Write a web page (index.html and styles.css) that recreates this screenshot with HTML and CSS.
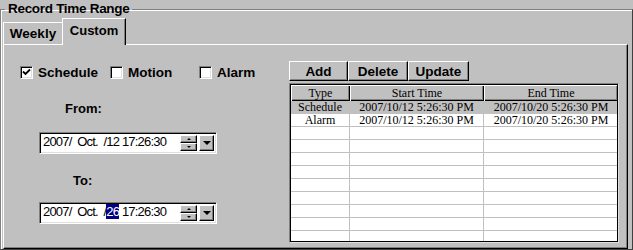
FILE: index.html
```html
<!DOCTYPE html>
<html lang="en">
<head>
  <meta charset="UTF-8" />
  <meta name="viewport" content="width=device-width, initial-scale=1.0"/>
  <title>Record Time Range</title>
  <link rel="stylesheet" href="styles.css">
</head>
<body>

  <fieldset class="group">
    <legend>Record Time Range</legend>

    <div class="tabs">
      <div class="tab tab-weekly">Weekly</div>
      <div class="tab tab-active">Custom</div>
    </div>

    <div class="panel">
      <div class="left">
        <div class="checks">
          <label class="check">
            <span class="box">
              <svg width="9" height="9" viewBox="0 0 9 9"><path d="M1 3.5 L3.5 6 L8 1.5" fill="none" stroke="#000" stroke-width="1.8"/></svg>
            </span>
            Schedule
          </label>
          <label class="check"><span class="box"></span>Motion</label>
          <label class="check"><span class="box"></span>Alarm</label>
        </div>

        <div class="field-label label-from">From:</div>
        <div class="datebox">
          <span class="date-text">2007/  Oct.  /12 17:26:30</span>
          <div class="spin">
            <span class="spin-btn"><i class="arrow-up"></i></span>
            <span class="spin-btn"><i class="arrow-down"></i></span>
          </div>
          <span class="drop-btn"><i class="arrow-drop"></i></span>
        </div>

        <div class="field-label label-to">To:</div>
        <div class="datebox datebox-to">
          <span class="date-text">2007/  Oct.  /<span class="sel">26</span> 17:26:30</span>
          <div class="spin">
            <span class="spin-btn"><i class="arrow-up"></i></span>
            <span class="spin-btn"><i class="arrow-down"></i></span>
          </div>
          <span class="drop-btn"><i class="arrow-drop"></i></span>
        </div>
      </div>

      <div class="right">
        <div class="buttons">
          <button class="btn btn-add">Add</button>
          <button class="btn btn-delete">Delete</button>
          <button class="btn btn-update">Update</button>
        </div>

        <div class="list">
          <div class="list-inner">
            <table>
              <tr>
                <th class="col-type">Type</th>
                <th class="col-time">Start Time</th>
                <th class="col-time">End Time</th>
              </tr>
              <tr class="selected">
                <td>Schedule</td>
                <td>2007/10/12 5:26:30 PM</td>
                <td>2007/10/20 5:26:30 PM</td>
              </tr>
              <tr>
                <td>Alarm</td>
                <td>2007/10/12 5:26:30 PM</td>
                <td>2007/10/20 5:26:30 PM</td>
              </tr>
              <tr><td></td><td></td><td></td></tr>
              <tr><td></td><td></td><td></td></tr>
              <tr><td></td><td></td><td></td></tr>
              <tr><td></td><td></td><td></td></tr>
              <tr><td></td><td></td><td></td></tr>
              <tr><td></td><td></td><td></td></tr>
              <tr><td></td><td></td><td></td></tr>
              <tr><td></td><td></td><td></td></tr>
              <tr><td></td><td></td><td></td></tr>
            </table>
          </div>
        </div>
      </div>
    </div>
  </fieldset>

</body>
</html>
```

FILE: styles.css
```css
body {
  margin: 0;
  width: 633px;
  height: 250px;
  overflow: hidden;
  background: #c0c0c0;
  font-family: "Liberation Sans", Arial, sans-serif;
  font-size: 13px;
  color: #000;
}

.group {
  margin: 0;
  padding: 0 4px 0 2px;
  height: 250px;
  box-sizing: border-box;
  border: 1px solid #808080;
  border-right-color: #404040;
  border-bottom-color: #404040;
  box-shadow: inset 1px 1px 0 #fff;
}

.group legend {
  margin-left: 2px;
  padding: 0 3px;
  font-size: 13.5px;
  line-height: 18px;
  font-weight: bold;
  letter-spacing: -0.3px;
}

/* tabs */
.tabs {
  display: flex;
  align-items: flex-end;
  height: 26px;
}

.tab {
  box-sizing: border-box;
  font-weight: bold;
  text-align: center;
  line-height: 16px;
  background: #c0c0c0;
  border-top: 1px solid #fff;
  border-left: 1px solid #fff;
}

.tab-weekly {
  width: 59px;
  height: 22px;
  padding-top: 3px;
  font-size: 13.5px;
}

.tab-active {
  position: relative;
  z-index: 1;
  width: 64px;
  height: 27px;
  margin-bottom: -1px;
  padding-top: 4px;
  border-right: 1px solid #000;
  box-shadow: inset -1px 0 0 #808080;
}

.panel {
  display: flex;
  height: 205px;
  box-sizing: border-box;
  border: 1px solid #000;
  border-top-color: #fff;
  border-left-color: #fff;
  box-shadow: inset -1px -1px 0 #808080;
}

/* left column */
.left {
  width: 285px;
}

.checks {
  display: grid;
  grid-template-columns: 90px 89px auto;
  margin: 21px 0 0 16px;
  height: 13px;
}

.check {
  display: flex;
  align-items: center;
  gap: 5px;
  font-size: 13.5px;
  font-weight: bold;
  line-height: 13px;
}

.box, .datebox {
  box-sizing: border-box;
  background: #fff;
  border: 1px solid;
  border-color: #808080 #fff #fff #808080;
  box-shadow: inset 1px 1px 0 #000, inset -1px -1px 0 #dfdfdf;
}

.box {
  flex: none;
  width: 13px;
  height: 13px;
  display: flex;
  align-items: center;
  justify-content: center;
}

.field-label {
  font-weight: bold;
  line-height: 15px;
}

.label-from {
  margin: 22px 0 0 61px;
}

.label-to {
  margin: 19px 0 0 69px;
}

.datebox {
  display: flex;
  width: 178px;
  height: 22px;
  margin: 16px 0 0 35px;
  padding: 2px;
}

.datebox-to {
  margin-top: 14px;
}

.date-text {
  flex: 1;
  padding-left: 1px;
  white-space: pre;
  line-height: 14px;
  letter-spacing: -0.8px;
}

.sel {
  background: #000080;
  color: #fff;
}

.spin {
  display: flex;
  flex-direction: column;
  width: 17px;
  margin-right: 2px;
}

.spin-btn, .drop-btn, .btn {
  box-sizing: border-box;
  display: flex;
  align-items: center;
  justify-content: center;
  background: #c0c0c0;
  border: 1px solid;
  border-color: #fff #000 #000 #fff;
  box-shadow: inset -1px -1px 0 #808080;
}

.spin-btn {
  height: 9px;
}

.drop-btn {
  width: 15px;
}

.arrow-up, .arrow-down, .arrow-drop {
  width: 0;
  height: 0;
  border-left: 2px solid transparent;
  border-right: 2px solid transparent;
}

.arrow-up {
  border-bottom: 2px solid #000;
}

.arrow-down {
  border-top: 2px solid #000;
}

.arrow-drop {
  border-left-width: 4px;
  border-right-width: 4px;
  border-top: 4px solid #000;
}

/* right column */
.right {
  padding-top: 16px;
}

.buttons {
  display: flex;
}

.btn {
  height: 20px;
  padding: 0;
  font-family: inherit;
  font-size: 13.5px;
  font-weight: bold;
  color: #000;
}

.btn-add { width: 59px; }
.btn-delete { width: 60px; }
.btn-update { width: 61px; }

.list {
  width: 330px;
  height: 160px;
  margin-top: 2px;
  box-sizing: border-box;
  border: 1px solid;
  border-color: #808080 #dfdfdf #dfdfdf #808080;
}

.list-inner {
  height: 100%;
  box-sizing: border-box;
  border: 1px solid #000;
  background: #fff;
  overflow: hidden;
}

table {
  table-layout: fixed;
  border-collapse: separate;
  border-spacing: 0;
  width: 326px;
  font-family: "Liberation Serif", "Times New Roman", serif;
  font-size: 12px;
}

th {
  height: 16px;
  padding: 0;
  font-weight: normal;
  background: #c0c0c0;
  box-shadow: inset 1px 1px 0 #fff, inset -1px -1px 0 #000, inset -2px -2px 0 #808080;
}

.col-type { width: 59px; }
.col-time { width: 134px; }

td {
  height: 12px;
  padding: 0;
  line-height: 12px;
  text-align: center;
  white-space: nowrap;
  border-right: 1px solid #c0c0c0;
  border-bottom: 1px solid #c0c0c0;
}

td:last-child {
  border-right: none;
}

.selected td {
  background: #c0c0c0;
}
```
